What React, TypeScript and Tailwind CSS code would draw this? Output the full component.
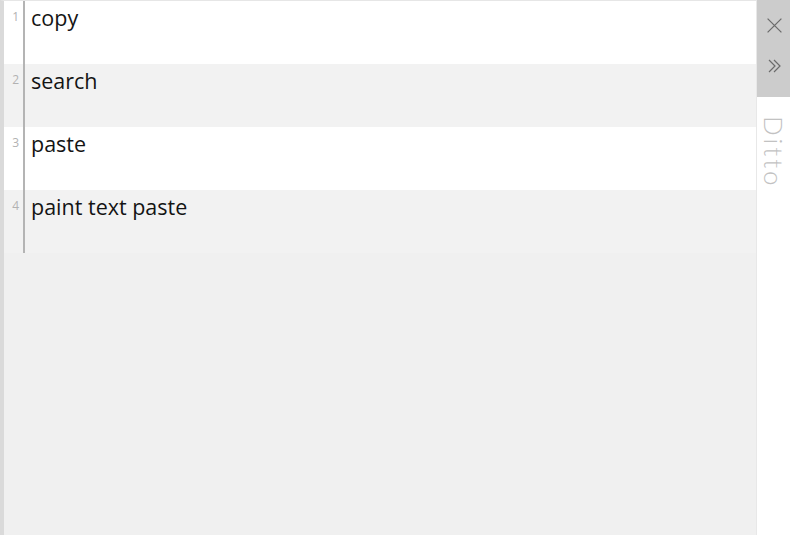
const clips = ["copy", "search", "paste", "paint text paste"];

function CloseIcon() {
  return (
    <svg width="17" height="17" viewBox="0 0 16 16" fill="none" stroke="#6b6b6b" strokeWidth="1.2">
      <path d="M1.5 1.5 L14.5 14.5 M14.5 1.5 L1.5 14.5" />
    </svg>
  );
}

function ExpandIcon() {
  return (
    <svg width="16" height="16" viewBox="0 0 16 16" fill="none" stroke="#6b6b6b" strokeWidth="1.2">
      <path d="M2 2 L8 8 L2 14 M7 2 L13 8 L7 14" />
    </svg>
  );
}

export default function App() {
  return (
    <div className="flex w-[790px] h-[535px] bg-white font-['Open_Sans',sans-serif]">
      <div className="flex-1 flex flex-col bg-[#f0f0f0] border-l-[4px] border-[#dadada] border-t border-t-[#e6e6e6] border-r border-r-[#e8e8e8]">
        {clips.map((text, i) => (
          <div
            key={i}
            className={`flex h-[63px] ${i % 2 === 0 ? "bg-white" : "bg-[#f2f2f2]"}`}
          >
            <div className="w-[21px] border-r-2 border-[#b4b4b4] text-right pr-[4px] pt-[10px] text-[12px] leading-none text-[#b2b2b2]">
              {i + 1}
            </div>
            <div className="pl-[6px] pt-[3px] text-[21.5px] leading-[28px] text-[#141414]">
              {text}
            </div>
          </div>
        ))}
      </div>
      <div className="w-[33px] flex flex-col bg-white">
        <div className="h-[97px] bg-[#cccccc] flex flex-col items-center">
          <div className="mt-[17px] ml-[2px]">
            <CloseIcon />
          </div>
          <div className="mt-[24px] ml-[2px]">
            <ExpandIcon />
          </div>
        </div>
        <div className="flex justify-center pt-[19px] pl-[1px]">
          <span className="[writing-mode:vertical-rl] font-['Lato',sans-serif] text-[26px] leading-[26px] tracking-[3px] font-light text-[#c2c2c2]">
            Ditto
          </span>
        </div>
      </div>
    </div>
  );
}
